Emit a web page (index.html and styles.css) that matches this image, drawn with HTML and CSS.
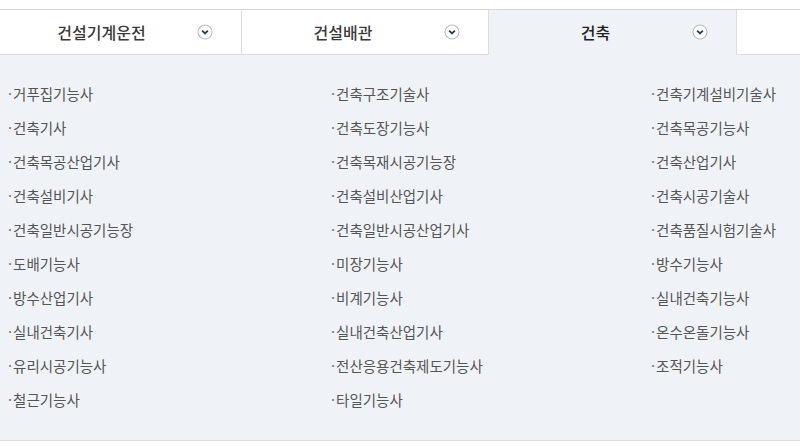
FILE: index.html
```html
<!DOCTYPE html>
<html lang="ko">
<head>
    <meta charset="UTF-8">
    <meta name="viewport" content="width=device-width, initial-scale=1.0">
    <title>자격종목</title>
    <link rel="stylesheet" href="styles.css">
</head>
<body>
    <div class="tabs">
        <div class="tab first">
            <span class="tab-label">건설기계운전</span>
            <svg class="tab-icon" viewBox="0 0 15 15"><circle cx="7.5" cy="7.5" r="6.6"/><path d="M4.8 6.2 L7.5 8.8 L10.2 6.2"/></svg>
        </div>
        <div class="tab">
            <span class="tab-label">건설배관</span>
            <svg class="tab-icon" viewBox="0 0 15 15"><circle cx="7.5" cy="7.5" r="6.6"/><path d="M4.8 6.2 L7.5 8.8 L10.2 6.2"/></svg>
        </div>
        <div class="tab active">
            <span class="tab-label">건축</span>
            <svg class="tab-icon" viewBox="0 0 15 15"><circle cx="7.5" cy="7.5" r="6.6"/><path d="M4.8 6.2 L7.5 8.8 L10.2 6.2"/></svg>
        </div>
        <div class="tab-rest"></div>
    </div>

    <!-- 종목 목록 -->
    <div class="panel">
        <ul class="col col-1">
            <li>거푸집기능사</li>
            <li>건축기사</li>
            <li>건축목공산업기사</li>
            <li>건축설비기사</li>
            <li>건축일반시공기능장</li>
            <li>도배기능사</li>
            <li>방수산업기사</li>
            <li>실내건축기사</li>
            <li>유리시공기능사</li>
            <li>철근기능사</li>
        </ul>
        <ul class="col col-2">
            <li>건축구조기술사</li>
            <li>건축도장기능사</li>
            <li>건축목재시공기능장</li>
            <li>건축설비산업기사</li>
            <li>건축일반시공산업기사</li>
            <li>미장기능사</li>
            <li>비계기능사</li>
            <li>실내건축산업기사</li>
            <li>전산응용건축제도기능사</li>
            <li>타일기능사</li>
        </ul>
        <ul class="col col-3">
            <li>건축기계설비기술사</li>
            <li>건축목공기능사</li>
            <li>건축산업기사</li>
            <li>건축시공기술사</li>
            <li>건축품질시험기술사</li>
            <li>방수기능사</li>
            <li>실내건축기능사</li>
            <li>온수온돌기능사</li>
            <li>조적기능사</li>
        </ul>
    </div>
</body>
</html>
```

FILE: styles.css
```css
body {
    margin: 0;
    background-color: #ffffff;
    font-family: "Noto Sans CJK KR", "Noto Sans", sans-serif;
}
.tabs {
    display: flex;
    margin-top: 9px;
    border-top: 1px solid #d6d6d6;
    height: 45px;
}
.tab {
    display: flex;
    align-items: center;
    width: 247px;
    height: 45px;
    box-sizing: border-box;
    background-color: #ffffff;
    border-right: 1px solid #dddddd;
    border-bottom: 1px solid #dddddd;
}
.tab.first {
    width: 242px;
    padding-left: 6px;
}
.tab.active {
    width: 248px;
    padding-left: 10px;
    background-color: #eff3f7;
    border-bottom-color: #eff3f7;
}
.tab-rest {
    flex: 1;
    border-bottom: 1px solid #dddddd;
}
.tab-label {
    flex: 1;
    text-align: center;
    font-size: 16px;
    font-weight: 500;
    color: #3a3a3a;
}
.tab.active .tab-label {
    color: #222222;
}
.tab-icon {
    width: 16px;
    height: 16px;
    margin-right: 28px;
}
.tab-icon circle {
    fill: #ffffff;
    stroke: #bdbdbd;
    stroke-width: 1;
}
.tab-icon path {
    fill: none;
    stroke: #2c3b5c;
    stroke-width: 1.7;
}
.panel {
    display: flex;
    background-color: #eff3f7;
    padding: 22px 0 23px 8px;
    border-bottom: 1px solid #dcdcdc;
}
.col {
    list-style: none;
    margin: 0;
    padding: 0;
}
.col-1 {
    width: 323px;
}
.col-2 {
    width: 320px;
}
.col li {
    line-height: 34px;
    height: 34px;
    font-size: 14.5px;
    color: #555555;
}
.col li::before {
    content: "·";
    color: #777777;
    margin-right: 1px;
}
```
